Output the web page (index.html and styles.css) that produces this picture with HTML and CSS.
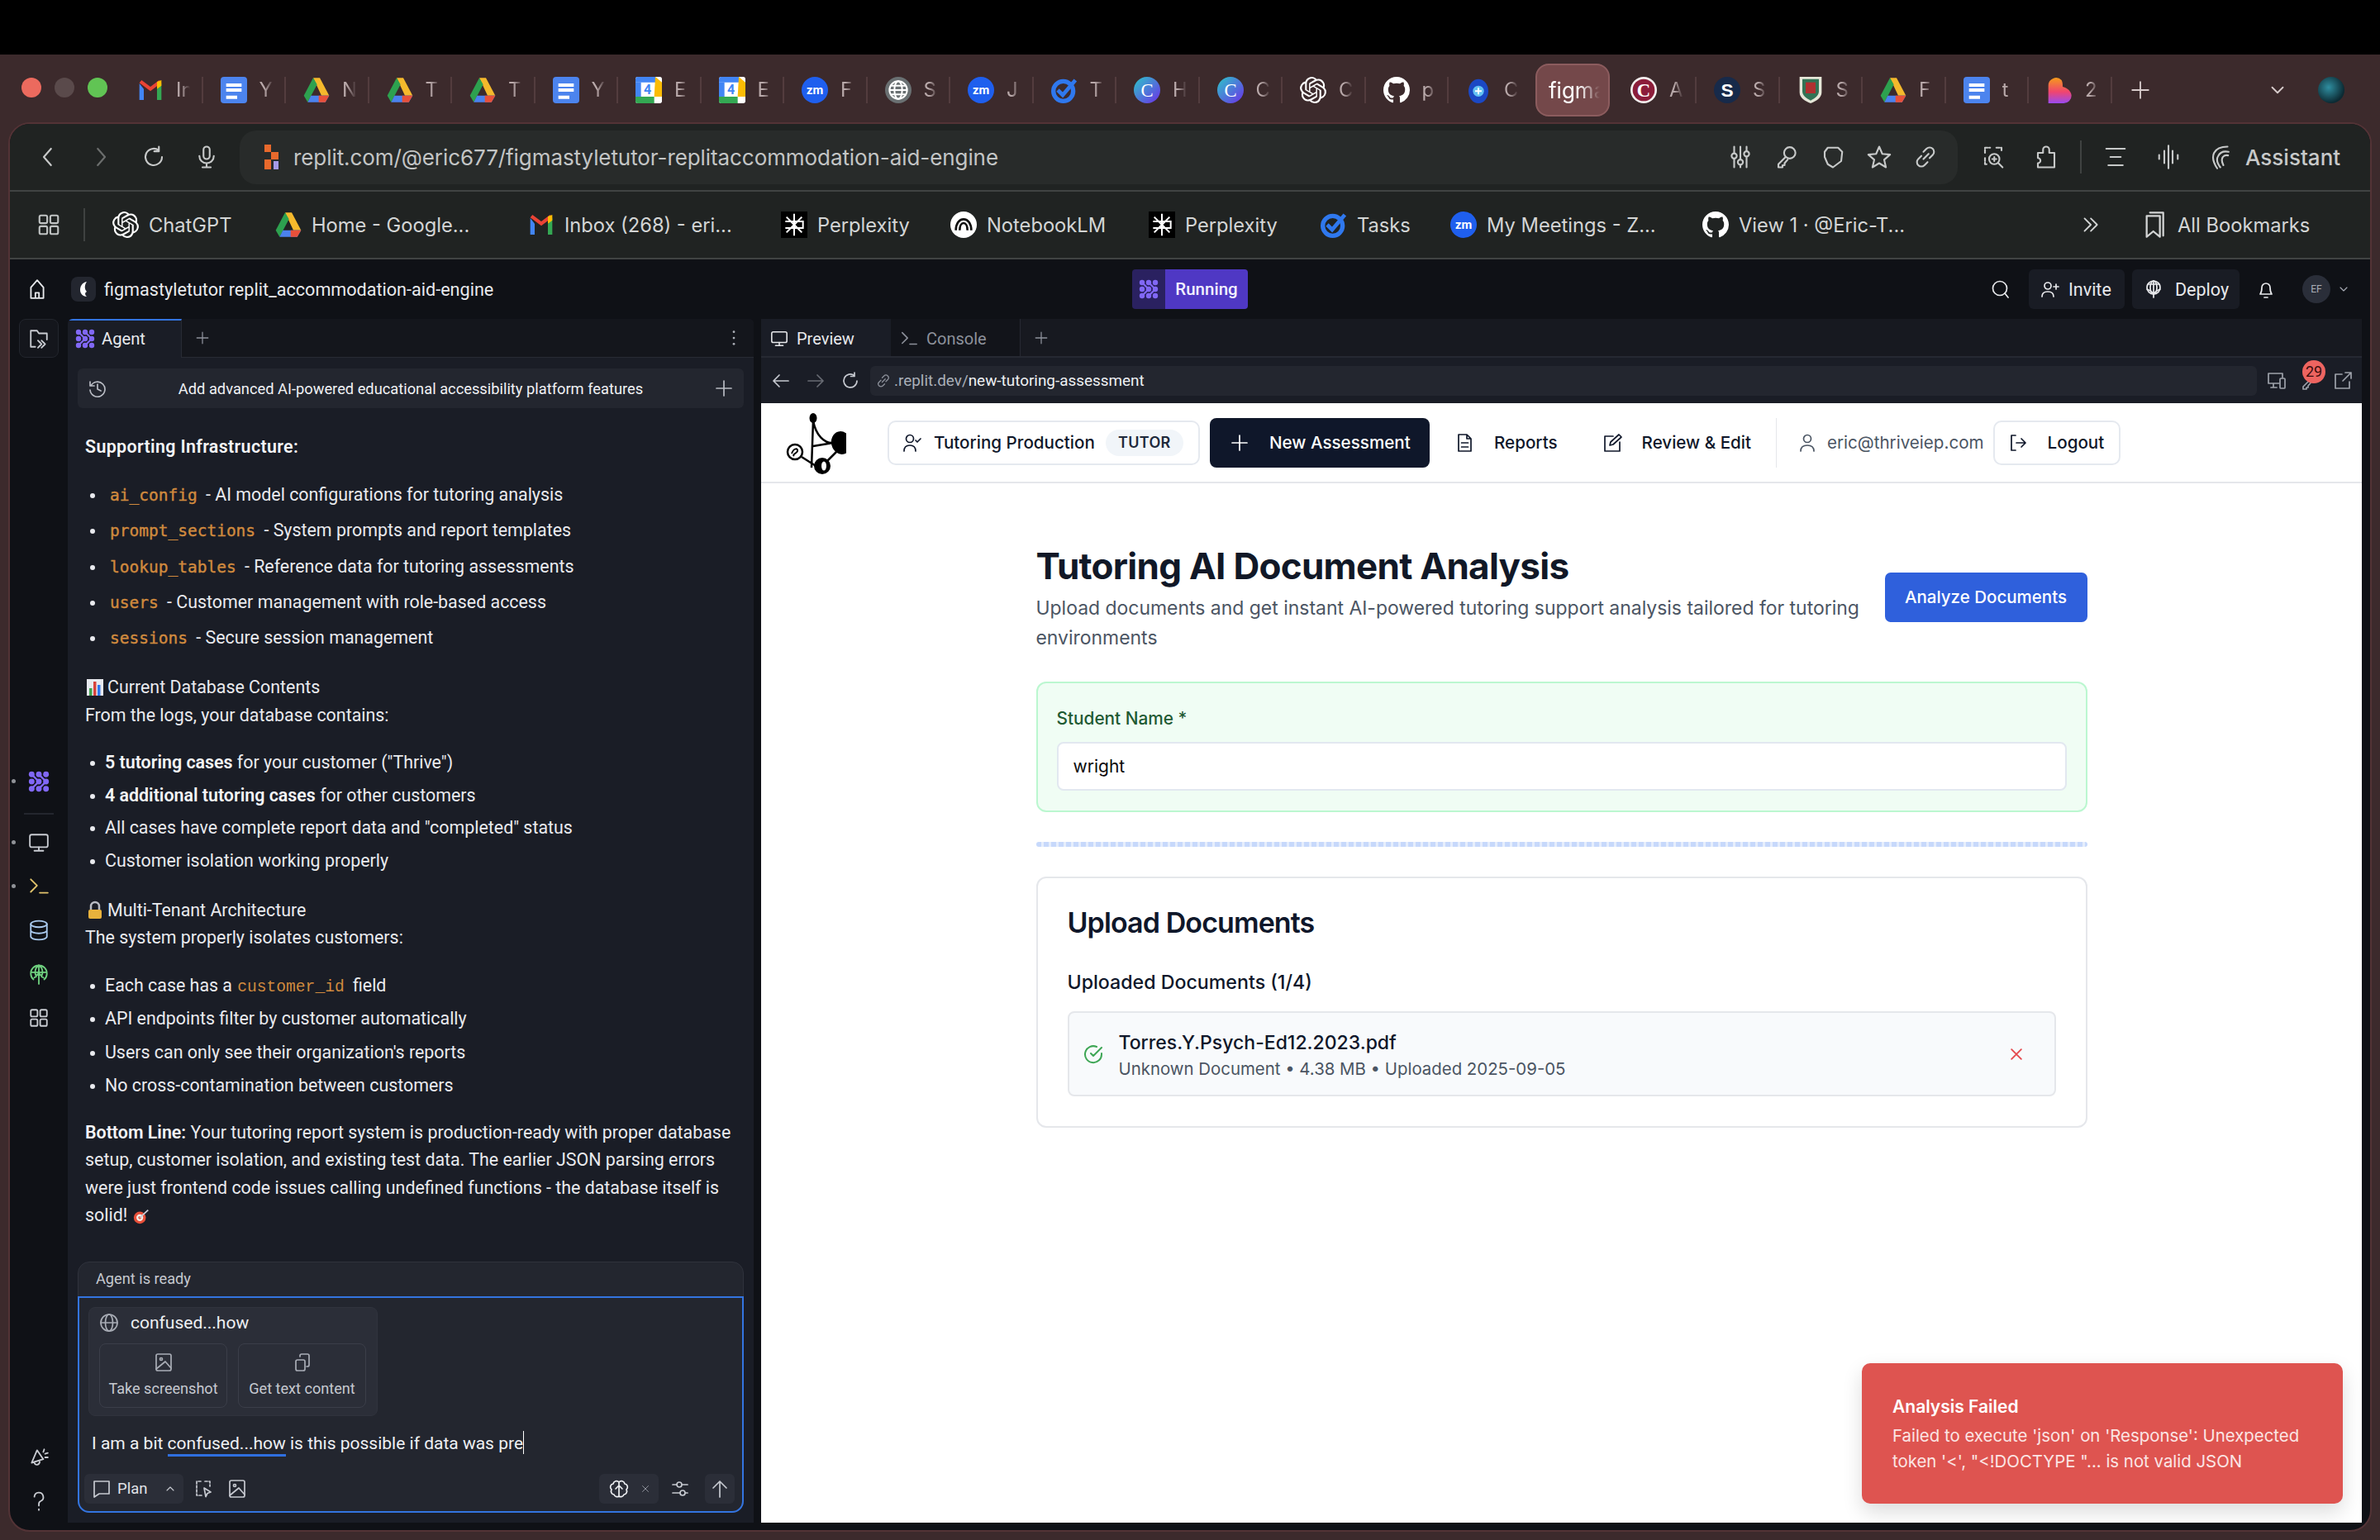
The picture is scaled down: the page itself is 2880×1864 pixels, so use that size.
FILE: index.html
```html
<!DOCTYPE html>
<html lang="en">
<head>
<meta charset="utf-8">
<title>Replit - figmastyletutor</title>
<link rel="stylesheet" href="styles.css">
</head>
<body>
<svg class="defs" aria-hidden="true">
  <defs>
    <linearGradient id="cg" x1="0" y1="0" x2="1" y2="1"><stop offset="0" stop-color="#2cc7c9"/><stop offset="1" stop-color="#6d2ee8"/></linearGradient>
    <linearGradient id="hg" x1="0" y1="0" x2="0" y2="1"><stop offset="0" stop-color="#f59a1b"/><stop offset=".55" stop-color="#f0456f"/><stop offset="1" stop-color="#9a4af0"/></linearGradient>
    <symbol id="gmail" viewBox="0 0 24 24"><path d="M2 6v15h4V11z" fill="#4285f4"/><path d="M22 6v15h-4V11z" fill="#34a853"/><path d="M2 5.500 12 13 22 5.500 20 3l-8 6-8-6-2 2.500z" fill="#ea4335"/><path d="M18 4.500 22 3v5l-4 3z" fill="#fbbc04"/></symbol>
    <symbol id="docs" viewBox="0 0 24 24"><rect x="0" y="0" width="24" height="24" rx="3" fill="#4c84ee"/><path d="M5 6h14v3H5zM5 10.500h14v3H5zM5 17h10v3H5z" fill="#fff"/></symbol>
    <symbol id="drive" viewBox="0 0 24 24"><path d="M9 1h6l8.500 16h-7z" fill="#f5b92c"/><path d="M9 1 .5 17l3.500 6 8.500-16z" fill="#2da14f"/><path d="M7 17h16.500L20 23H4z" fill="#4b82ee"/><path d="M14 17h9.500L20 23h-6z" fill="#e8503a"/></symbol>
    <symbol id="cal" viewBox="0 0 24 24"><rect x="0" y="0" width="24" height="24" rx="2" fill="#fff"/><path d="M0 2a2 2 0 0 1 2-2h16v5H0z" fill="#4285f4"/><path d="M0 18h17v6H2a2 2 0 0 1-2-2z" fill="#34a853"/><path d="M18 0l6 5v13h-7z" fill="#fbbc04"/><path d="M0 5h5v13H0z" fill="#4285f4"/><text x="11" y="16" font-size="12" font-family="Roboto,sans-serif" font-weight="700" fill="#4285f4" text-anchor="middle">4</text></symbol>
    <symbol id="zm" viewBox="0 0 24 24"><circle cx="12" cy="12" r="12" fill="#1f5fee"/><text x="12" y="16" font-size="11" font-family="Roboto,sans-serif" font-weight="700" fill="#fff" text-anchor="middle">zm</text></symbol>
    <symbol id="globeb" viewBox="0 0 24 24"><circle cx="12" cy="12" r="12" fill="#6a7072"/><g fill="none" stroke="#fff" stroke-width="1.500"><circle cx="12" cy="12" r="8"/><ellipse cx="12" cy="12" rx="3.500" ry="8"/><path d="M4 12h16M5 8h14M5 16h14"/></g></symbol>
    <symbol id="tasks" viewBox="0 0 24 24"><circle cx="11" cy="13" r="9" fill="none" stroke="#2f78ee" stroke-width="4"/><path d="m6 12 4.500 4.500L22 3" fill="none" stroke="#2f78ee" stroke-width="3.500"/></symbol>
    <symbol id="canva" viewBox="0 0 24 24"><circle cx="12" cy="12" r="12" fill="url(#cg)"/><text x="12" y="18" font-size="17" font-family="Liberation Serif,serif" fill="#fff" text-anchor="middle">C</text></symbol>
    <symbol id="gpt" viewBox="0 0 24 24"><path fill="#fff" d="M22.2819 9.8211a5.9847 5.9847 0 0 0-.5157-4.9108 6.0462 6.0462 0 0 0-6.5098-2.9A6.0651 6.0651 0 0 0 4.9807 4.1818a5.9847 5.9847 0 0 0-3.9977 2.9 6.0462 6.0462 0 0 0 .7427 7.0966 5.98 5.98 0 0 0 .511 4.9107 6.051 6.051 0 0 0 6.5146 2.9001A5.9847 5.9847 0 0 0 13.2599 24a6.0557 6.0557 0 0 0 5.7718-4.2058 5.9894 5.9894 0 0 0 3.9977-2.9001 6.0557 6.0557 0 0 0-.7475-7.0729zm-9.022 12.6081a4.4755 4.4755 0 0 1-2.8764-1.0408l.1419-.0804 4.7783-2.7582a.7948.7948 0 0 0 .3927-.6813v-6.7369l2.02 1.1686a.071.071 0 0 1 .038.052v5.5826a4.504 4.504 0 0 1-4.4945 4.4944zm-9.6607-4.1254a4.4708 4.4708 0 0 1-.5346-3.0137l.142.0852 4.783 2.7582a.7712.7712 0 0 0 .7806 0l5.8428-3.3685v2.3324a.0804.0804 0 0 1-.0332.0615L9.74 19.9502a4.4992 4.4992 0 0 1-6.1408-1.6464zM2.3408 7.8956a4.485 4.485 0 0 1 2.3655-1.9728V11.6a.7664.7664 0 0 0 .3879.6765l5.8144 3.3543-2.0201 1.1685a.0757.0757 0 0 1-.071 0l-4.8303-2.7865A4.504 4.504 0 0 1 2.3408 7.872zm16.5963 3.8558L13.1038 8.364 15.1192 7.2a.0757.0757 0 0 1 .071 0l4.8303 2.7913a4.4944 4.4944 0 0 1-.6765 8.1042v-5.6772a.79.79 0 0 0-.407-.667zm2.0107-3.0231l-.142-.0852-4.7735-2.7818a.7759.7759 0 0 0-.7854 0L9.409 9.2297V6.8974a.0662.0662 0 0 1 .0284-.0615l4.8303-2.7866a4.4992 4.4992 0 0 1 6.6802 4.66zM8.3065 12.863l-2.02-1.1638a.0804.0804 0 0 1-.038-.0567V6.0742a4.4992 4.4992 0 0 1 7.3757-3.4537l-.142.0805L8.704 5.459a.7948.7948 0 0 0-.3927.6813zm1.0976-2.3654l2.602-1.4998 2.6069 1.4998v2.9994l-2.5974 1.4997-2.6067-1.4997Z"/></symbol>
    <symbol id="gh" viewBox="0 0 16 16"><path fill="#fff" d="M8 0C3.580 0 0 3.580 0 8c0 3.540 2.290 6.530 5.470 7.590.4.070.55-.17.55-.38 0-.19-.01-.82-.01-1.490-2.010.37-2.530-.49-2.690-.94-.09-.23-.48-.94-.82-1.130-.28-.15-.68-.52-.01-.53.63-.01 1.080.58 1.230.82.72 1.210 1.870.87 2.330.66.07-.52.28-.87.51-1.070-1.780-.2-3.640-.89-3.640-3.950 0-.87.31-1.590.82-2.150-.08-.2-.36-1.020.08-2.120 0 0 .67-.21 2.200.82.64-.18 1.320-.27 2-.27.68 0 1.360.09 2 .27 1.530-1.040 2.200-.82 2.200-.82.44 1.100.16 1.920.08 2.120.51.56.82 1.270.82 2.150 0 3.070-1.870 3.750-3.650 3.950.29.25.54.73.54 1.480 0 1.070-.01 1.930-.01 2.200 0 .21.15.46.55.38A8.013 8.013 0 0 0 16 8c0-4.420-3.580-8-8-8z"/></symbol>
    <symbol id="shieldb" viewBox="0 0 24 24"><ellipse cx="12" cy="13" rx="9" ry="11" fill="#1b48c4"/><circle cx="12" cy="13" r="5" fill="#62c1f2"/><path d="M12 10v6M9 13h6" stroke="#fff" stroke-width="1.500"/></symbol>
    <symbol id="credc" viewBox="0 0 24 24"><circle cx="12" cy="12" r="12" fill="#f3eeee"/><circle cx="12" cy="12" r="10" fill="#8c1d3a"/><text x="12" y="18" font-size="17" font-weight="700" font-family="Liberation Serif,serif" fill="#fff" text-anchor="middle">C</text></symbol>
    <symbol id="sem" viewBox="0 0 24 24"><circle cx="12" cy="12" r="12" fill="#172a4a"/><text x="12" y="18" font-size="17" font-weight="700" font-family="Liberation Sans,sans-serif" fill="#fff" text-anchor="middle">S</text></symbol>
    <symbol id="crest" viewBox="0 0 24 24"><path d="M2 0h20v14c0 5-5 8-10 10C7 22 2 19 2 14z" fill="#e6e6d8"/><path d="M4.500 2h15v11c0 4-3.500 6.500-7.500 8.500C8 19.500 4.500 17 4.500 13z" fill="#327355"/><rect x="7.500" y="5" width="9" height="10" fill="#b03030"/></symbol>
    <symbol id="heart" viewBox="0 0 24 24"><path d="M2 8a7 7 0 0 1 12-5c1 2 1 4 1 6 5 1 8 5 8 8a7 7 0 0 1-7 7H2z" fill="url(#hg)"/></symbol>
    <symbol id="perp" viewBox="0 0 24 24"><rect width="24" height="24" fill="#000"/><path d="M12 2v20M5 5l7 7 7-7M5 19l7-7 7 7M4 9h16v6H4" fill="none" stroke="#fff" stroke-width="1.500"/></symbol>
    <symbol id="nblm" viewBox="0 0 24 24"><circle cx="12" cy="12" r="12" fill="#fff"/><path d="M5 17c0-6 3-10 7-10s7 4 7 10M8.500 17c0-4 1.500-6.500 3.500-6.500s3.500 2.500 3.500 6.500" fill="none" stroke="#111" stroke-width="2"/></symbol>
    <symbol id="replit" viewBox="0 0 18 30"><path d="M0 0h8v9H0zM8 9h9v9H8zM0 18h8v12H0z" fill="#e8692c"/><path d="M11 20h6v10h-6z" fill="#a59be8"/></symbol>
    <symbol id="agent" viewBox="0 0 24 24"><g fill="#8168f5"><circle cx="4" cy="4" r="3.200"/><circle cx="12" cy="4" r="3.200"/><circle cx="20" cy="4" r="3.200"/><circle cx="4" cy="12" r="3.200"/><circle cx="12" cy="12" r="3.200"/><circle cx="20" cy="12" r="3.200"/><circle cx="4" cy="20" r="3.200"/><circle cx="12" cy="20" r="3.200"/><circle cx="20" cy="20" r="3.200"/></g><path d="m12 4 8 8-8 8M4 4l8 8-8 8" fill="none" stroke="#8168f5" stroke-width="2.200"/></symbol>
    <symbol id="i-apps" viewBox="0 0 24 24"><rect x="3" y="3" width="7.500" height="7.500" rx="1.500"/><rect x="13.500" y="3" width="7.500" height="7.500" rx="1.500"/><rect x="3" y="13.500" width="7.500" height="7.500" rx="1.500"/><rect x="13.500" y="13.500" width="7.500" height="7.500" rx="1.500"/></symbol>
    <symbol id="i-back" viewBox="0 0 24 24"><path d="m15 4-7 8 7 8"/></symbol>
    <symbol id="i-fwd" viewBox="0 0 24 24"><path d="m9 4 7 8-7 8"/></symbol>
    <symbol id="i-reload" viewBox="0 0 24 24"><path d="M20 12a8 8 0 1 1-3-6.300M17 2v4.500h-4.500"/></symbol>
    <symbol id="i-mic" viewBox="0 0 24 24"><rect x="9" y="2" width="6" height="12" rx="3"/><path d="M5 11a7 7 0 0 0 14 0M12 18v4M8 22h8"/></symbol>
    <symbol id="i-tune" viewBox="0 0 24 24"><path d="M6 2v6M6 14v8M12 2v12M12 20v2M18 2v4M18 12v10"/><circle cx="6" cy="11" r="2.500"/><circle cx="12" cy="17" r="2.500"/><circle cx="18" cy="9" r="2.500"/></symbol>
    <symbol id="i-key" viewBox="0 0 24 24"><circle cx="15" cy="8" r="5.500"/><path d="M11 12 4 19v3h4v-2h2v-2l3-3.500"/></symbol>
    <symbol id="i-shield" viewBox="0 0 24 24"><path d="M7 3h10l4 4-1 9-8 6-5-3-3-7V7z"/></symbol>
    <symbol id="i-star" viewBox="0 0 24 24"><path d="m12 2 3 7 7.500.7-5.700 5 1.700 7.300L12 18l-6.500 4 1.700-7.300-5.700-5L9 9z"/></symbol>
    <symbol id="i-link" viewBox="0 0 24 24"><path d="m10 14 5-5M8 11l-3 3a4.200 4.200 0 0 0 6 6l3-3M16 13l3-3a4.200 4.200 0 0 0-6-6l-3 3"/></symbol>
    <symbol id="i-lens" viewBox="0 0 24 24"><path d="M4 8V3h5M15 3h5v4M4 13v6h3" stroke-dasharray="3 1.500"/><circle cx="13" cy="14" r="5"/><path d="m17 18 4 4M13 12v4M11 14h4"/></symbol>
    <symbol id="i-puzzle" viewBox="0 0 24 24"><path d="M4 8h5V5a3 3 0 0 1 6 0v3h5v14H4v-4a2.500 2.500 0 0 0 0-5z"/></symbol>
    <symbol id="i-list" viewBox="0 0 24 24"><path d="M3 4h18M7 12h10M5 20h14"/></symbol>
    <symbol id="i-wave" viewBox="0 0 24 24"><path d="M3 10v4M8 6v12M12 1v22M16 6v12M21 10v4"/></symbol>
    <symbol id="i-assist" viewBox="0 0 24 24"><path d="M8 23C4 17 3 12 5 8c2-4 7-6 13-6M11 22c-3-4-4-8-2-11 1.500-3 5-5 10-4M14 20c-1.500-3-2-6-.5-8 1-1.500 3-2 5-1.500"/></symbol>
    <symbol id="i-mark" viewBox="0 0 24 24"><path d="M8 1h12v21M5 4h12v19l-6-5-6 5z"/></symbol>
    <symbol id="i-chev2" viewBox="0 0 24 24"><path d="m6 5 7 7-7 7M13 5l7 7-7 7"/></symbol>
    <symbol id="i-home" viewBox="0 0 24 24"><path d="M5 10 12 2l7 8v12H5zM10 22v-6h4v6"/></symbol>
    <symbol id="i-search" viewBox="0 0 24 24"><circle cx="11" cy="11" r="8.500"/><path d="m17 17 4 5"/></symbol>
    <symbol id="i-useradd" viewBox="0 0 24 24"><circle cx="9" cy="8" r="4"/><path d="M2 21c0-4 3-6 7-6s7 2 7 6M19 6v6M16 9h6"/></symbol>
    <symbol id="i-deploy" viewBox="0 0 24 24"><circle cx="12" cy="10" r="8"/><path d="M12 2v20M5 6h14M4 12c3 1 5 2 8 5 3-3 5-4 8-5"/><ellipse cx="12" cy="10" rx="4" ry="8"/></symbol>
    <symbol id="i-bell" viewBox="0 0 24 24"><path d="M5 18c1.500-2 2-4 2-8a5 5 0 0 1 10 0c0 4 .5 6 2 8zM10 22h4"/></symbol>
    <symbol id="i-chev" viewBox="0 0 24 24"><path d="m6 9 6 6 6-6"/></symbol>
    <symbol id="i-up" viewBox="0 0 24 24"><path d="m6 15 6-6 6 6"/></symbol>
    <symbol id="i-files" viewBox="0 0 24 24"><path d="M8 21H3V3h7l2 3h9v7M15 14l4 4-4 4M11 14l4 4-4 4"/></symbol>
    <symbol id="i-monitor" viewBox="0 0 24 24"><rect x="2" y="3" width="20" height="14" rx="2"/><path d="M12 17v4M7 21h10"/></symbol>
    <symbol id="i-term" viewBox="0 0 24 24"><path d="m3 4 7 7-7 7M13 19h9"/></symbol>
    <symbol id="i-db" viewBox="0 0 24 24"><ellipse cx="12" cy="5" rx="9" ry="3.500"/><path d="M3 5v14c0 2 4 3.500 9 3.500s9-1.500 9-3.500V5M3 12c0 2 4 3.500 9 3.500s9-1.500 9-3.500"/></symbol>
    <symbol id="i-net" viewBox="0 0 24 24"><path d="M6 18A9 9 0 1 1 18 18M12 2v21M3 10h18M12 2c-4 3-5 8-3 13M12 2c4 3 5 8 3 13M7 16l5-5 5 5"/></symbol>
    <symbol id="i-ann" viewBox="0 0 24 24"><path d="M4 18 10 4l7 10zM7 18c1 3 5 3 6-1M18 3l-1 3M22 7l-3 1M22 12h-3"/></symbol>
    <symbol id="i-help" viewBox="0 0 24 24"><path d="M7 7a5 5 0 1 1 7 5c-2 1-2 2-2 5M12 21v1"/></symbol>
    <symbol id="i-plus" viewBox="0 0 24 24"><path d="M12 3v18M3 12h18"/></symbol>
    <symbol id="i-hist" viewBox="0 0 24 24"><path d="M3 4v5h5M4 9a9 9 0 1 1-1 5M12 7v6l4 2"/></symbol>
    <symbol id="i-globe" viewBox="0 0 24 24"><circle cx="12" cy="12" r="10"/><ellipse cx="12" cy="12" rx="4.500" ry="10"/><path d="M2 12h20"/></symbol>
    <symbol id="i-pic" viewBox="0 0 24 24"><rect x="3" y="2" width="18" height="20" rx="2"/><circle cx="9" cy="8" r="1.500"/><path d="m3 20 11-9 7 8"/></symbol>
    <symbol id="i-copy" viewBox="0 0 24 24"><rect x="4" y="9" width="11" height="13" rx="2"/><path d="M9 5V4a2 2 0 0 1 2-2h7a2 2 0 0 1 2 2v11a2 2 0 0 1-2 2h-1"/></symbol>
    <symbol id="i-chat" viewBox="0 0 24 24"><path d="M3 3h18v15H9l-6 4z"/></symbol>
    <symbol id="i-select" viewBox="0 0 24 24"><path d="M9 3H4v17h6M14 3h6v6" stroke-dasharray="3 2"/><path d="m13 11 8 5-4 1.500-2 4z"/></symbol>
    <symbol id="i-brain" viewBox="0 0 24 24"><path d="M12 4a4 4 0 0 0-7 2 4 4 0 0 0-2 7 4 4 0 0 0 3 6 4 4 0 0 0 6 2 4 4 0 0 0 6-2 4 4 0 0 0 3-6 4 4 0 0 0-2-7 4 4 0 0 0-7-2zM12 4v17M8 12l4-4 4 4"/></symbol>
    <symbol id="i-x" viewBox="0 0 24 24"><path d="m5 5 14 14M19 5 5 19"/></symbol>
    <symbol id="i-sliders" viewBox="0 0 24 24"><path d="M3 7h5M14 7h7M3 17h9M18 17h3"/><circle cx="11" cy="7" r="3"/><circle cx="15" cy="17" r="3"/></symbol>
    <symbol id="i-arrowup" viewBox="0 0 24 24"><path d="M12 22V3M4 11l8-8 8 8"/></symbol>
    <symbol id="i-dots" viewBox="0 0 24 24"><circle cx="12" cy="4" r="1.500"/><circle cx="12" cy="12" r="1.500"/><circle cx="12" cy="20" r="1.500"/></symbol>
    <symbol id="i-left" viewBox="0 0 24 24"><path d="M21 12H3M10 5l-7 7 7 7"/></symbol>
    <symbol id="i-right" viewBox="0 0 24 24"><path d="M3 12h18M14 5l7 7-7 7"/></symbol>
    <symbol id="i-devices" viewBox="0 0 24 24"><path d="M15 15H2V3h17v5M8 15v4M5 20h7"/><rect x="16" y="9" width="6" height="12" rx="1"/></symbol>
    <symbol id="i-open" viewBox="0 0 24 24"><path d="M11 4H3v17h17v-8M12 12 22 2M15 2h7v7"/></symbol>
    <symbol id="i-usercheck" viewBox="0 0 24 24"><circle cx="9" cy="7" r="4.500"/><path d="M2 22c0-5 3-7 7-7s7 2 7 7M16 9l2 2 4-4"/></symbol>
    <symbol id="i-doc" viewBox="0 0 24 24"><path d="M5 2h10l5 5v15H5zM15 2v5h5M8.500 12h8M8.500 17h8"/></symbol>
    <symbol id="i-edit" viewBox="0 0 24 24"><path d="M13 4H3v18h18V11M9 15l1-4L20 2l3 3-10 9z"/></symbol>
    <symbol id="i-user" viewBox="0 0 24 24"><circle cx="12" cy="7" r="4.500"/><path d="M4 22c0-5 3-7 8-7s8 2 8 7"/></symbol>
    <symbol id="i-logout" viewBox="0 0 24 24"><path d="M9 3H4v18h5M10 12h11M16 7l5 5-5 5"/></symbol>
    <symbol id="i-okc" viewBox="0 0 24 24"><path d="M22 11v1a10 10 0 1 1-6-9M9 11l3 3 10-10"/></symbol>
  </defs>
</svg>

<div class="blackbar"></div>
<div class="screen">
  <div class="tabstrip">
    <div class="lights"><i class="light red"></i><i class="light grey"></i><i class="light green"></i></div>
    <div class="tab"><svg class="fav"><use href="#gmail"/></svg><span class="tt">In</span></div>
    <div class="tab"><svg class="fav"><use href="#docs"/></svg><span class="tt">Y</span></div>
    <div class="tab"><svg class="fav"><use href="#drive"/></svg><span class="tt">N</span></div>
    <div class="tab"><svg class="fav"><use href="#drive"/></svg><span class="tt">T</span></div>
    <div class="tab"><svg class="fav"><use href="#drive"/></svg><span class="tt">T</span></div>
    <div class="tab"><svg class="fav"><use href="#docs"/></svg><span class="tt">Y</span></div>
    <div class="tab"><svg class="fav"><use href="#cal"/></svg><span class="tt">E</span></div>
    <div class="tab"><svg class="fav"><use href="#cal"/></svg><span class="tt">E</span></div>
    <div class="tab"><svg class="fav"><use href="#zm"/></svg><span class="tt">F</span></div>
    <div class="tab"><svg class="fav"><use href="#globeb"/></svg><span class="tt">S</span></div>
    <div class="tab"><svg class="fav"><use href="#zm"/></svg><span class="tt">J</span></div>
    <div class="tab"><svg class="fav"><use href="#tasks"/></svg><span class="tt">T</span></div>
    <div class="tab"><svg class="fav"><use href="#canva"/></svg><span class="tt">H</span></div>
    <div class="tab"><svg class="fav"><use href="#canva"/></svg><span class="tt">C</span></div>
    <div class="tab"><svg class="fav"><use href="#gpt"/></svg><span class="tt">C</span></div>
    <div class="tab"><svg class="fav"><use href="#gh"/></svg><span class="tt">p</span></div>
    <div class="tab tab-noedge"><svg class="fav"><use href="#shieldb"/></svg><span class="tt">C</span></div>
    <div class="tab-active"><span class="tt-active">figma</span></div>
    <div class="tab tab-wide"><svg class="fav"><use href="#credc"/></svg><span class="tt">A</span></div>
    <div class="tab"><svg class="fav"><use href="#sem"/></svg><span class="tt">S</span></div>
    <div class="tab"><svg class="fav"><use href="#crest"/></svg><span class="tt">S</span></div>
    <div class="tab"><svg class="fav"><use href="#drive"/></svg><span class="tt">F</span></div>
    <div class="tab"><svg class="fav"><use href="#docs"/></svg><span class="tt">t</span></div>
    <div class="tab"><svg class="fav"><use href="#heart"/></svg><span class="tt">2</span></div>
    <svg class="ic newtab"><use href="#i-plus"/></svg>
    <svg class="ic tabmenu"><use href="#i-chev"/></svg>
    <span class="profile"></span>
  </div>

  <div class="window">
    <div class="toolbar">
      <div class="navs">
        <svg class="ic tb-ic"><use href="#i-back"/></svg>
        <svg class="ic tb-ic dim"><use href="#i-fwd"/></svg>
        <svg class="ic tb-ic"><use href="#i-reload"/></svg>
        <svg class="ic tb-ic"><use href="#i-mic"/></svg>
      </div>
      <div class="omnibox">
        <svg class="omni-fav"><use href="#replit"/></svg>
        <span class="omni-url">replit.com/@eric677/figmastyletutor-replitaccommodation-aid-engine</span>
        <div class="omni-icons">
          <svg class="ic tb-ic"><use href="#i-tune"/></svg>
          <svg class="ic tb-ic"><use href="#i-key"/></svg>
          <svg class="ic tb-ic"><use href="#i-shield"/></svg>
          <svg class="ic tb-ic"><use href="#i-star"/></svg>
          <svg class="ic tb-ic"><use href="#i-link"/></svg>
        </div>
      </div>
      <div class="tb-right">
        <svg class="ic tb-ic"><use href="#i-lens"/></svg>
        <svg class="ic tb-ic"><use href="#i-puzzle"/></svg>
        <span class="tb-div"></span>
        <svg class="ic tb-ic"><use href="#i-list"/></svg>
        <svg class="ic tb-ic"><use href="#i-wave"/></svg>
        <svg class="ic tb-ic"><use href="#i-assist"/></svg>
        <span class="assistant">Assistant</span>
      </div>
    </div>

    <div class="bookmarks">
      <svg class="ic bm-apps"><use href="#i-apps"/></svg>
      <span class="bm-div"></span>
      <div class="bm"><svg class="bm-ic"><use href="#gpt"/></svg>ChatGPT</div>
      <div class="bm"><svg class="bm-ic"><use href="#drive"/></svg>Home - Google...</div>
      <div class="bm"><svg class="bm-ic"><use href="#gmail"/></svg>Inbox (268) - eri...</div>
      <div class="bm"><svg class="bm-ic"><use href="#perp"/></svg>Perplexity</div>
      <div class="bm"><svg class="bm-ic"><use href="#nblm"/></svg>NotebookLM</div>
      <div class="bm"><svg class="bm-ic"><use href="#perp"/></svg>Perplexity</div>
      <div class="bm"><svg class="bm-ic"><use href="#tasks"/></svg>Tasks</div>
      <div class="bm"><svg class="bm-ic"><use href="#zm"/></svg>My Meetings - Z...</div>
      <div class="bm"><svg class="bm-ic"><use href="#gh"/></svg>View 1 · @Eric-T...</div>
      <svg class="ic bm-more"><use href="#i-chev2"/></svg>
      <div class="bm"><svg class="ic bm-ic"><use href="#i-mark"/></svg>All Bookmarks</div>
    </div>

    <div class="rheader">
      <div class="rh-left">
        <svg class="ic rh-home"><use href="#i-home"/></svg>
        <span class="proj-ic"><svg class="proj-glyph" viewBox="0 0 24 24"><path d="M16 3c-6 1-8 6-8 10s3 8 8 8c-3-3-2-5 0-6-3-3-3-8 0-12z" fill="#fff"/></svg></span>
        <span class="proj-name">figmastyletutor replit_accommodation-aid-engine</span>
      </div>
      <div class="running"><span class="run-ic"><svg class="run-glyph"><use href="#agent"/></svg></span><span class="run-txt">Running</span></div>
      <div class="rh-right">
        <svg class="ic rh-ic"><use href="#i-search"/></svg>
        <div class="rh-btn invite"><svg class="ic rh-ic"><use href="#i-useradd"/></svg>Invite</div>
        <div class="rh-btn deploy"><svg class="ic rh-ic"><use href="#i-deploy"/></svg>Deploy</div>
        <svg class="ic rh-ic bell"><use href="#i-bell"/></svg>
        <span class="avatar">EF</span>
        <svg class="ic av-chev"><use href="#i-chev"/></svg>
      </div>
    </div>

    <div class="workspace">
      <nav class="rail">
        <span class="rail-files"><svg class="ic rail-ic"><use href="#i-files"/></svg></span>
        <div class="rail-mid">
          <span class="rail-item dot"><svg class="rail-ic"><use href="#agent"/></svg></span>
          <span class="rail-sep"></span>
          <span class="rail-item dot"><svg class="ic rail-ic"><use href="#i-monitor"/></svg></span>
          <span class="rail-item dot"><svg class="ic rail-ic c-yellow"><use href="#i-term"/></svg></span>
          <span class="rail-item"><svg class="ic rail-ic c-blue"><use href="#i-db"/></svg></span>
          <span class="rail-item"><svg class="ic rail-ic c-green"><use href="#i-net"/></svg></span>
          <span class="rail-item"><svg class="ic rail-ic"><use href="#i-apps"/></svg></span>
        </div>
        <div class="rail-end">
          <span class="rail-item"><svg class="ic rail-ic"><use href="#i-ann"/></svg></span>
          <span class="rail-item"><svg class="ic rail-ic"><use href="#i-help"/></svg></span>
        </div>
      </nav>

      <section class="agent">
        <div class="ag-tabs">
          <div class="ag-tab"><svg class="ag-tab-ic"><use href="#agent"/></svg>Agent</div>
          <svg class="ic ag-plus"><use href="#i-plus"/></svg>
          <svg class="ag-dots"><use href="#i-dots"/></svg>
        </div>
        <div class="hist">
          <svg class="ic hist-ic"><use href="#i-hist"/></svg>
          <span class="hist-txt">Add advanced AI-powered educational accessibility platform features</span>
          <svg class="ic hist-ic"><use href="#i-plus"/></svg>
        </div>
        <div class="msgs">
          <p class="mp mp-head"><b>Supporting Infrastructure:</b></p>
          <ul class="ml ml-code">
            <li><code>ai_config</code> - AI model configurations for tutoring analysis</li>
            <li><code>prompt_sections</code> - System prompts and report templates</li>
            <li><code>lookup_tables</code> - Reference data for tutoring assessments</li>
            <li><code>users</code> - Customer management with role-based access</li>
            <li><code>sessions</code> - Secure session management</li>
          </ul>
          <p class="mp mp-sec"><svg class="emo" viewBox="0 0 24 24"><rect x="2" y="2" width="20" height="20" fill="#e8eaf0"/><rect x="5" y="13" width="3.500" height="9" fill="#3fa34d"/><rect x="10" y="5" width="3.500" height="17" fill="#d8433c"/><rect x="15" y="9" width="3.500" height="13" fill="#2f78ee"/></svg>Current Database Contents<br>From the logs, your database contains:</p>
          <ul class="ml">
            <li><b>5 tutoring cases</b> for your customer ("Thrive")</li>
            <li><b>4 additional tutoring cases</b> for other customers</li>
            <li>All cases have complete report data and "completed" status</li>
            <li>Customer isolation working properly</li>
          </ul>
          <p class="mp mp-sec"><svg class="emo" viewBox="0 0 24 24"><path d="M7 11V7a5 5 0 0 1 10 0v4" fill="none" stroke="#b9bcc4" stroke-width="2.500"/><rect x="4" y="11" width="16" height="11" rx="2" fill="#e8b23c"/></svg>Multi-Tenant Architecture<br>The system properly isolates customers:</p>
          <ul class="ml ml-wide">
            <li>Each case has a <code class="code-thin">customer_id</code> field</li>
            <li>API endpoints filter by customer automatically</li>
            <li>Users can only see their organization's reports</li>
            <li>No cross-contamination between customers</li>
          </ul>
          <p class="mp mp-sec mp-tight"><b>Bottom Line:</b> Your tutoring report system is production-ready with proper database<br>setup, customer isolation, and existing test data. The earlier JSON parsing errors<br>were just frontend code issues calling undefined functions - the database itself is<br>solid! <svg class="emo-dart" viewBox="0 0 24 24"><circle cx="10" cy="14" r="8" fill="#e8503a"/><circle cx="10" cy="14" r="4.500" fill="#f2efe8"/><circle cx="10" cy="14" r="2" fill="#e8503a"/><path d="M10 14 21 4" stroke="#c9cdd6" stroke-width="2"/></svg></p>
        </div>
        <div class="composer">
          <div class="comp-status">Agent is ready</div>
          <div class="comp-box">
            <div class="chip">
              <div class="chip-head"><svg class="ic chip-ic"><use href="#i-globe"/></svg>confused...how</div>
              <div class="chip-btns">
                <div class="chip-btn"><svg class="ic chipb-ic"><use href="#i-pic"/></svg>Take screenshot</div>
                <div class="chip-btn"><svg class="ic chipb-ic"><use href="#i-copy"/></svg>Get text content</div>
              </div>
            </div>
            <div class="comp-text">I am a bit <span class="comp-link">confused...how</span> is this possible if data was pre<span class="caret"></span></div>
            <div class="comp-bar">
              <div class="comp-plan"><svg class="ic cb-ic"><use href="#i-chat"/></svg><span class="plan-txt">Plan</span><svg class="ic cb-small"><use href="#i-up"/></svg></div>
              <svg class="ic cb-ic cb-first"><use href="#i-select"/></svg>
              <svg class="ic cb-ic"><use href="#i-pic"/></svg>
              <div class="comp-spacer"></div>
              <div class="comp-brain"><svg class="ic cb-ic c-white"><use href="#i-brain"/></svg><svg class="ic cb-x"><use href="#i-x"/></svg></div>
              <svg class="ic cb-ic"><use href="#i-sliders"/></svg>
              <div class="comp-send"><svg class="ic cb-ic"><use href="#i-arrowup"/></svg></div>
            </div>
          </div>
        </div>
      </section>

      <section class="preview">
        <div class="pv-tabs">
          <div class="pv-tab pv-on"><svg class="ic pv-ic"><use href="#i-monitor"/></svg>Preview</div>
          <div class="pv-tab pv-off"><svg class="ic pv-ic"><use href="#i-term"/></svg>Console</div>
          <svg class="ic pv-plus"><use href="#i-plus"/></svg>
        </div>
        <div class="pv-url">
          <svg class="ic url-ic"><use href="#i-left"/></svg>
          <svg class="ic url-ic dim"><use href="#i-right"/></svg>
          <svg class="ic url-ic"><use href="#i-reload"/></svg>
          <div class="url-box"><svg class="ic url-link"><use href="#i-link"/></svg><span class="url-dim">.replit.dev/</span><span class="url-path">new-tutoring-assessment</span></div>
          <svg class="ic url-act"><use href="#i-devices"/></svg>
          <span class="key-wrap"><svg class="ic url-act"><use href="#i-key"/></svg><span class="badge">29</span></span>
          <svg class="ic url-act"><use href="#i-open"/></svg>
        </div>
        <div class="app">
          <header class="app-head">
            <svg class="logo" viewBox="20 0 74 90"><g fill="none" stroke="#000" stroke-width="2.500"><path d="M54 18 52 75M54 18c3 18 14 28 24 27M78 45l-24 4M86 52 68 70M40 62l22 14" /><circle cx="32" cy="56" r="9" stroke-width="2.500"/><path d="M28 58c3-8 8-6 7-3s-7 4-4 6" stroke-width="2"/></g><ellipse cx="54" cy="15" rx="4.500" ry="6" fill="#000"/><ellipse cx="88" cy="45" rx="14" ry="12" transform="rotate(75 88 45)" fill="#000"/><circle cx="65" cy="73" r="10" fill="#000"/><ellipse cx="67" cy="73" rx="3" ry="5.500" fill="#fff"/></svg>
            <div class="org"><svg class="ic hd-ic"><use href="#i-usercheck"/></svg><span class="org-name">Tutoring Production</span><span class="org-tag">TUTOR</span></div>
            <div class="new-btn"><svg class="ic hd-ic"><use href="#i-plus"/></svg>New Assessment</div>
            <div class="nav-link"><svg class="ic hd-ic"><use href="#i-doc"/></svg>Reports</div>
            <div class="nav-link"><svg class="ic hd-ic"><use href="#i-edit"/></svg>Review &amp; Edit</div>
            <span class="hd-div"></span>
            <div class="hd-user"><svg class="ic hd-ic"><use href="#i-user"/></svg>eric@thriveiep.com</div>
            <div class="logout"><svg class="ic hd-ic"><use href="#i-logout"/></svg>Logout</div>
          </header>
          <main class="content">
            <div class="title-row">
              <div class="title-col">
                <h1 class="h1">Tutoring AI Document Analysis</h1>
                <p class="lead">Upload documents and get instant AI-powered tutoring support analysis tailored for tutoring environments</p>
              </div>
              <div class="analyze">Analyze Documents</div>
            </div>
            <div class="student">
              <div class="student-label">Student Name *</div>
              <div class="student-input">wright</div>
            </div>
            <div class="dashes"></div>
            <div class="upload">
              <h2 class="h2">Upload Documents</h2>
              <h3 class="h3">Uploaded Documents (1/4)</h3>
              <div class="file">
                <svg class="ic file-ok"><use href="#i-okc"/></svg>
                <div class="file-text">
                  <div class="file-name">Torres.Y.Psych-Ed12.2023.pdf</div>
                  <div class="file-meta">Unknown Document • 4.38 MB • Uploaded 2025-09-05</div>
                </div>
                <svg class="ic file-x"><use href="#i-x"/></svg>
              </div>
            </div>
          </main>
          <div class="toast">
            <div class="toast-title">Analysis Failed</div>
            <div class="toast-body">Failed to execute 'json' on 'Response': Unexpected token '&lt;', "&lt;!DOCTYPE "... is not valid JSON</div>
          </div>
        </div>
      </section>
    </div>
  </div>
</div>
</body>
</html>
```

FILE: styles.css
```css
* { box-sizing: border-box; }
html, body { margin: 0; padding: 0; }
body { width: 2880px; height: 1864px; overflow: hidden; background: #000; font-family: Inter, "Liberation Sans", sans-serif; }
.defs { width: 0; height: 0; display: block; overflow: hidden; }
.ic { fill: none; stroke: currentColor; stroke-width: 1.7; stroke-linecap: round; stroke-linejoin: round; flex: none; }
.dim { opacity: .45; }
svg { flex: none; }

.blackbar { height: 66px; background: #000; }
.screen { height: 1798px; background: #3c2a2c; display: flex; flex-direction: column; }

/* tab strip */
.tabstrip { height: 82px; flex: none; display: flex; align-items: center; padding-top: 4px; position: relative; color: #b9a9aa; }
.lights { display: flex; gap: 16px; padding-left: 26px; width: 145px; margin-top: -6px; flex: none; }
.light { width: 24px; height: 24px; border-radius: 50%; display: block; }
.red { background: #ec6a5e; }
.grey { background: #5a4a4b; }
.green { background: #61c454; }
.tab { width: 100.5px; height: 32px; flex: none; display: flex; align-items: center; padding-left: 21px; border-right: 2px solid #533c3e; }
.tab-noedge { border-right: 0; width: 105px; padding-left: 20px; }
.tab-wide { width: 105px; padding-left: 25px; }
.fav { width: 32px; height: 32px; }
.tt { margin-left: 15px; width: 20px; overflow: hidden; font-size: 24px; white-space: nowrap; line-height: 32px; -webkit-mask-image: linear-gradient(90deg, #000 30%, transparent 85%); mask-image: linear-gradient(90deg, #000 30%, transparent 85%); }
.tab-active { width: 90px; height: 64px; flex: none; background: #74484a; border: 2px solid #8c5c5e; border-radius: 16px; display: flex; align-items: center; padding-left: 14px; }
.tt-active { width: 62px; overflow: hidden; color: #fff; font-size: 26px; white-space: nowrap; -webkit-mask-image: linear-gradient(90deg, #000 60%, transparent 100%); mask-image: linear-gradient(90deg, #000 60%, transparent 100%); }
.newtab { width: 26px; height: 26px; margin-left: 21px; color: #d8cccc; }
.tabmenu { width: 26px; height: 26px; margin-left: 140px; color: #d8cccc; }
.profile { width: 32px; height: 32px; border-radius: 50%; margin-left: 36px; background: radial-gradient(circle at 40% 40%, #2f8ea0, #0c2a33 70%); }

/* window */
.window { flex: 1; margin: 0 10px 10px; border: 2px solid #533336; border-radius: 26px; background: #0f1116; display: flex; flex-direction: column; overflow: hidden; }
.toolbar { height: 82px; flex: none; background: #202322; border-bottom: 2px solid #404343; display: flex; align-items: center; color: #c7c9c9; }
.tb-ic { width: 30px; height: 30px; }
.navs { display: flex; gap: 34px; padding-left: 31px; width: 278px; flex: none; }
.omnibox { width: 2079px; height: 65px; flex: none; background: #282b2a; border-radius: 20px; display: flex; align-items: center; padding-left: 30px; }
.omni-fav { width: 18px; height: 30px; }
.omni-url { margin-left: 17px; font-size: 26px; color: #c3c5c5; flex: 1; white-space: nowrap; letter-spacing: -0.08px; }
.omni-icons { display: flex; gap: 26px; padding-right: 24px; }
.tb-right { display: flex; align-items: center; padding-left: 28px; gap: 34px; }
.tb-div { width: 2px; height: 40px; background: #3f4241; margin: 0 -8px; }
.assistant { font-size: 26px; font-weight: 500; color: #c7c9c9; margin-left: -20px; }

.bookmarks { height: 82px; flex: none; background: #202322; border-bottom: 2px solid #404343; display: grid; align-items: center; grid-template-columns: 89px 35px 197px 306px 306px 205px 240px 208px 157px 305px 456px 75px 1fr; font-size: 23.7px; color: #d3d5d5; }
.bm-apps { width: 30px; height: 30px; grid-column: 1; margin-left: 32px; color: #bfc2c2; }
.bm-div { grid-column: 2; width: 2px; height: 40px; background: #3f4241; justify-self: start; }
.bm { display: flex; align-items: center; gap: 12px; white-space: nowrap; }
.bm-ic { width: 32px; height: 32px; }
.bm-more { width: 26px; height: 26px; color: #d3d5d5; }

/* replit header */
.rheader { height: 72px; flex: none; display: flex; align-items: center; background: #0f1116; color: #e8e9ec; }
.rh-left { width: 1358px; flex: none; display: flex; align-items: center; padding-left: 20px; }
.rh-home { width: 26px; height: 26px; }
.proj-ic { width: 30px; height: 30px; margin-left: 28px; background: #23262f; border-radius: 8px; display: flex; align-items: center; justify-content: center; }
.proj-glyph { width: 24px; height: 24px; }
.proj-name { margin-left: 10px; font-family: Roboto, sans-serif; font-size: 21.6px; white-space: nowrap; }
.running { width: 140px; height: 48px; flex: none; display: flex; border-radius: 4px; overflow: hidden; }
.run-ic { width: 40px; background: #2a2160; display: flex; align-items: center; justify-content: center; }
.run-glyph { width: 24px; height: 24px; }
.run-txt { flex: 1; background: #4f38c4; color: #f2f0ff; font: 500 20.5px/48px Roboto, sans-serif; text-align: center; }
.rh-right { flex: 1; display: flex; align-items: center; justify-content: flex-end; padding-right: 24px; font-family: Roboto, sans-serif; font-size: 21.5px; }
.rh-ic { width: 24px; height: 24px; }
.rh-btn { height: 48px; display: flex; align-items: center; gap: 10px; background: #191c24; border-radius: 6px; }
.invite { width: 116px; padding-left: 14px; margin-left: 22px; }
.deploy { width: 130px; padding-left: 14px; margin-left: 9px; gap: 14px; }
.bell { margin-left: 20px; }
.avatar { width: 34px; height: 34px; border-radius: 50%; background: #2a2e39; color: #a9adb6; font-size: 12px; text-align: center; line-height: 34px; margin-left: 32px; }
.av-chev { width: 16px; height: 16px; margin-left: 8px; color: #a9adb6; }

/* workspace */
.workspace { flex: 1; min-height: 0; display: flex; padding-bottom: 9px; }
.rail { width: 70px; flex: none; display: flex; flex-direction: column; align-items: center; color: #c9ccd2; }
.rail-files { width: 48px; height: 47px; border: 1px solid #22252d; border-radius: 8px; display: flex; align-items: center; justify-content: center; background: #14161c; }
.rail-ic { width: 26px; height: 26px; }
.rail-mid { margin-top: 500px; display: flex; flex-direction: column; align-items: center; gap: 27px; }
.rail-item { height: 26px; width: 26px; display: block; position: relative; }
.dot::before { content: ""; position: absolute; left: -20px; top: 10px; width: 5px; height: 5px; border-radius: 50%; background: #8f9297; }
.rail-sep { width: 36px; height: 2px; background: #23262e; margin: -2px 0 -6px; }
.rail-end { margin-top: auto; display: flex; flex-direction: column; gap: 27px; padding-bottom: 13px; }
.c-yellow { color: #e2c46c; }
.c-blue { color: #a9c9ee; }
.c-green { color: #6fd07f; }
.c-white { color: #eef0f3; }

/* agent panel */
.agent { width: 830px; flex: none; background: #1a1d26; display: flex; flex-direction: column; border-radius: 6px 6px 0 0; font-family: Roboto, sans-serif; color: #eef0f3; overflow: hidden; }
.ag-tabs { height: 47px; flex: none; display: flex; align-items: center; background: #14161c; border-bottom: 1px solid #282b34; }
.ag-tab { width: 138px; height: 47px; background: #1a1d26; border-top: 2px solid #3374e0; display: flex; align-items: center; gap: 8px; padding-left: 9px; font-size: 20.2px; color: #e8e9ec; border-right: 1px solid #282b34; }
.ag-tab-ic { width: 24px; height: 24px; }
.ag-plus { width: 18px; height: 18px; margin-left: 16px; color: #8d919b; }
.ag-dots { width: 22px; height: 22px; margin-left: auto; margin-right: 13px; fill: #aeb2ba; }
.hist { height: 48px; flex: none; margin: 13px 12px 0; background: #23262f; border-radius: 6px; display: flex; align-items: center; padding: 0 12px; color: #b9bcc4; }
.hist-ic { width: 24px; height: 24px; }
.hist-txt { flex: 1; text-align: center; font-size: 18.3px; color: #f0f1f4; white-space: nowrap; }
.msgs { flex: 1; min-height: 0; padding: 30px 0 0 21px; font-size: 21.4px; line-height: 34px; overflow: hidden; white-space: nowrap; color: #e9eaee; }
.mp { margin: 0; }
.mp b, .ml b { font-weight: 600; color: #f4f5f7; }
.mp-head b { letter-spacing: .35px; }
.mp-sec { margin-top: 26px; line-height: 33.5px; }
.mp-tight { margin-top: 23px; line-height: 33.3px; }
.ml { margin: 24px 0 0; padding: 0 0 0 24px; list-style: none; }
.ml li { height: 34px; margin-bottom: 5.5px; position: relative; }
.ml li::before { content: ""; position: absolute; left: -18px; top: 15px; width: 6px; height: 6px; background: #e9eaee; border-radius: 50%; }
.ml li:last-child { margin-bottom: 0; }
.ml-code { padding-left: 30px; }
.ml-code li { margin-bottom: 9.25px; }
.ml-code li::before { left: -24px; }
.ml-wide li { margin-bottom: 6.5px; }
code { font-family: "DejaVu Sans Mono", "Liberation Mono", monospace; font-size: 19.5px; line-height: 1; color: #d08a3e; margin-right: 5px; -webkit-text-stroke: .4px #d08a3e; }
.code-thin { font-family: "Liberation Mono", monospace; margin: 0 5px 0 1px; font-size: 19.6px; -webkit-text-stroke: 0; }
.emo { width: 24px; height: 24px; margin-right: 3px; vertical-align: -5px; }
.emo-dart { width: 22px; height: 22px; vertical-align: -5px; }

.composer { height: 304px; flex: none; margin: 0 12px 12px; border-radius: 14px; background: #23262f; border: 1px solid #2f323c; display: flex; flex-direction: column; }
.comp-status { height: 41px; flex: none; padding-left: 21px; line-height: 40px; font-size: 18.2px; color: #c6c9d0; }
.comp-box { flex: 1; border: 2px solid #3374e0; border-radius: 0 0 14px 14px; margin: 0 -1px -1px; display: flex; flex-direction: column; padding: 11px 0 0 11px; }
.chip { width: 350px; height: 132px; flex: none; background: #2b2e38; border: 1px solid #30333d; border-radius: 8px; padding: 0 12px; }
.chip-head { height: 43px; display: flex; align-items: center; gap: 14px; font-size: 21px; color: #eef0f3; padding-bottom: 8px; }
.chip-ic { width: 24px; height: 24px; color: #a9adb6; }
.chip-btns { display: grid; grid-template-columns: 155px 155px; gap: 13px; }
.chip-btn { height: 78px; border: 1px solid #3b3e49; border-radius: 8px; display: flex; flex-direction: column; align-items: center; justify-content: center; gap: 9px; font-size: 18.1px; color: #c6c9d0; white-space: nowrap; padding-bottom: 2px; }
.chipb-ic { width: 24px; height: 24px; color: #a9adb6; }
.comp-text { margin-top: 16px; height: 34px; padding-left: 4px; font-size: 21px; line-height: 34px; color: #eef0f3; white-space: nowrap; }
.comp-link { border-bottom: 3px solid #2f6fe0; padding-bottom: 1px; }
.caret { display: inline-block; width: 1px; height: 28px; background: #fff; vertical-align: -6px; }
.comp-bar { margin-top: 20px; height: 36px; flex: none; display: flex; align-items: center; margin-left: -5px; padding-right: 9px; color: #c6c9d0; }
.comp-plan { width: 120px; height: 36px; background: #2b2e38; border-radius: 6px; display: flex; align-items: center; padding-left: 9px; font-size: 18.5px; }
.plan-txt { margin-left: 7px; color: #e0e2e7; }
.cb-ic { width: 24px; height: 24px; }
.cb-small { width: 16px; height: 16px; margin-left: 20px; }
.cb-first { margin-right: 17px; margin-left: 12px; }
.comp-spacer { flex: 1; }
.comp-brain { width: 72px; height: 36px; background: #2b2e38; border-radius: 6px; display: flex; align-items: center; padding-left: 12px; }
.cb-x { width: 12px; height: 12px; margin-left: 14px; color: #9ea2ab; }
.comp-brain + .cb-ic { margin: 0 18px 0 14px; }
.comp-send { width: 36px; height: 36px; background: #2b2e38; border-radius: 6px; display: flex; align-items: center; justify-content: center; }

/* preview */
.preview { flex: 1; margin-left: 9px; margin-right: 10px; display: flex; flex-direction: column; min-width: 0; background: #1a1d26; font-family: Roboto, sans-serif; }
.pv-tabs { height: 47px; flex: none; display: flex; align-items: center; background: #171920; border-bottom: 2px solid #262932; }
.pv-tab { height: 45px; width: 157px; flex: none; display: flex; align-items: center; gap: 10px; padding: 2px 0 0 11px; font-size: 20px; }
.pv-on { background: #1a1d26; color: #e8e9ec; }
.pv-off { background: #12141a; color: #8d919b; border-right: 1px solid #262932; }
.pv-ic { width: 22px; height: 22px; }
.pv-plus { width: 18px; height: 18px; margin-left: 16px; color: #8d919b; }
.pv-url { height: 55px; flex: none; display: flex; align-items: center; padding-left: 12px; gap: 16px; color: #c6c9d0; background: #1a1d26; }
.url-ic { width: 24px; height: 24px; margin-right: 2px; }
.url-box { width: 1678px; height: 36px; flex: none; background: #23262f; border-radius: 6px; display: flex; align-items: center; padding-left: 7px; font-size: 18.9px; margin-left: -6px; margin-right: -4px; }
.url-link { width: 18px; height: 18px; color: #8d919b; margin-right: 4px; }
.url-dim { color: #aab0b9; }
.url-path { color: #eef0f3; }
.url-act { width: 24px; height: 24px; color: #9ea2ab; display: block; }
.key-wrap { position: relative; display: block; height: 24px; width: 24px; }
.badge { position: absolute; left: 3px; top: -13px; width: 28px; height: 28px; border-radius: 50%; background: #ee6460; color: #3a0d0c; font-size: 18px; line-height: 28px; text-align: center; }

.app { flex: 1; min-height: 0; background: #fff; position: relative; font-family: Inter, sans-serif; color: #111827; overflow: hidden; }
.app-head { height: 97px; display: flex; align-items: center; border-bottom: 2px solid #e5e7eb; padding-left: 29px; font-size: 20.6px; font-weight: 500; color: #0f172a; white-space: nowrap; }
.logo { width: 74px; height: 90px; margin-right: 50px; }
.hd-ic { width: 24px; height: 24px; }
.org { width: 378px; height: 54px; border: 2px solid #e5e9ef; border-radius: 10px; display: flex; align-items: center; padding-left: 16px; }
.org-name { margin-left: 14px; }
.org-tag { margin-left: 13px; width: 94px; height: 32px; background: #f1f5f9; border-radius: 16px; text-align: center; font-size: 18px; line-height: 32px; font-weight: 600; color: #1e293b; letter-spacing: .3px; }
.new-btn { width: 266px; height: 60px; margin-left: 12px; background: #0f172a; color: #fff; border-radius: 8px; display: flex; align-items: center; gap: 24px; padding-left: 24px; }
.nav-link { display: flex; align-items: center; gap: 24px; margin-left: 30px; }
.nav-link + .nav-link { margin-left: 54px; }
.hd-div { width: 1px; height: 60px; background: #e5e7eb; margin: 0 25px 0 30px; }
.hd-user { display: flex; align-items: center; gap: 12px; color: #4b5563; font-weight: 400; }
.hd-user .hd-ic { color: #4b5563; }
.logout { width: 154px; height: 54px; margin-left: 11px; border: 2px solid #e5e9ef; border-radius: 10px; display: flex; align-items: center; gap: 24px; padding-left: 16px; }

.content { width: 1272px; margin: 0 auto; padding-top: 70px; }
.title-row { display: flex; align-items: center; justify-content: space-between; }
.title-col { width: 1010px; }
.h1 { margin: 0; font-size: 44px; line-height: 60px; font-weight: 700; letter-spacing: -0.72px; color: #111827; white-space: nowrap; }
.lead { margin: 3px 0 0; font-size: 22.95px; line-height: 36px; color: #4b5563; }
.analyze { width: 245px; height: 60px; background: #2f60dc; color: #fff; border-radius: 7px; text-align: center; line-height: 60px; font-size: 20.5px; font-weight: 500; }
.student { height: 158px; margin-top: 35px; background: #f0fdf4; border: 2px solid #bbf7d0; border-radius: 12px; padding: 28px 23px 0; }
.student-label { font-size: 20.8px; line-height: 30px; font-weight: 500; color: #1f5a33; }
.student-input { height: 59px; margin-top: 13px; background: #fff; border: 2px solid #e2e8f0; border-radius: 8px; padding-left: 18px; line-height: 56px; font-size: 21px; color: #0a0a0a; }
.dashes { height: 6px; margin-top: 36px; border-radius: 3px; background: repeating-linear-gradient(90deg, #c7d9fb 0 6px, #e6eefc 6px 9px); }
.upload { height: 304px; margin-top: 36px; border: 2px solid #e5e7eb; border-radius: 12px; padding: 32px 36px 0; }
.h2 { margin: 0; font-size: 34px; line-height: 44px; font-weight: 600; letter-spacing: -0.9px; color: #0f172a; }
.h3 { margin: 33px 0 0; font-size: 23.2px; line-height: 34px; font-weight: 500; color: #0f172a; }
.file { height: 103px; margin-top: 18px; background: #f8fafc; border: 2px solid #e5e7eb; border-radius: 8px; display: flex; align-items: center; padding-left: 17px; }
.file-ok { width: 24px; height: 24px; color: #3ea655; stroke-width: 2; }
.file-text { margin-left: 19px; flex: 1; padding-top: 2px; }
.file-name { font-size: 23px; line-height: 34px; font-weight: 500; color: #0f172a; }
.file-meta { font-size: 20.4px; line-height: 30px; color: #4b5563; }
.file-x { width: 20px; height: 20px; color: #e5484d; margin-right: 36px; stroke-width: 2.2; }

.toast { position: absolute; right: 23px; bottom: 23px; width: 582px; height: 170px; background: #de5450; border-radius: 10px; padding: 37px 37px 0; color: #fff; box-shadow: 0 10px 24px rgba(0,0,0,.14); }
.toast-title { font-size: 21px; line-height: 32px; font-weight: 600; }
.toast-body { font-size: 20.4px; line-height: 31px; color: #fbe5e4; margin-top: 3px; }
```
